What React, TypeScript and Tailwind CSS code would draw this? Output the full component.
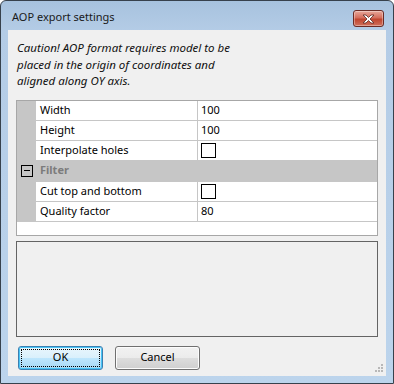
import React from 'react';

const font = { fontFamily: '"Noto Sans", "Open Sans", sans-serif' };

type Row =
  | { kind: 'text'; name: string; value: string }
  | { kind: 'check'; name: string }
  | { kind: 'group'; name: string };

const rows: Row[] = [
  { kind: 'text', name: 'Width', value: '100' },
  { kind: 'text', name: 'Height', value: '100' },
  { kind: 'check', name: 'Interpolate holes' },
  { kind: 'group', name: 'Filter' },
  { kind: 'check', name: 'Cut top and bottom' },
  { kind: 'text', name: 'Quality factor', value: '80' },
];

function CloseButton() {
  return (
    <div className="w-[31px] h-[17px] rounded-[3px] border border-[#6b2b25] bg-[linear-gradient(to_bottom,#e8a89b_0%,#d46d5c_45%,#c0452f_55%,#d0705c_100%)] flex items-center justify-center shadow-[inset_0_0_0_1px_rgba(255,255,255,0.35)]">
      <svg width="13" height="10" viewBox="0 0 13 10">
        <path
          d="M1 1 L4 1 L6.5 3.5 L9 1 L12 1 L8 5 L12 9 L9 9 L6.5 6.5 L4 9 L1 9 L5 5 Z"
          fill="#ffffff"
          stroke="#5a2a24"
          strokeWidth="0.8"
          strokeLinejoin="round"
        />
      </svg>
    </div>
  );
}

function Checkbox() {
  return <div className="w-[15px] h-[15px] border border-black bg-white" />;
}

function PropertyGrid() {
  return (
    <div className="mx-[8px] h-[136px] border border-[#a7a7a7] bg-white flex">
      <div className="flex-1 flex flex-col">
        {rows.map((r) =>
          r.kind === 'group' ? (
            <div key={r.name} className="h-[21px] bg-[#c6c6c6] flex items-center border-b border-[#c6c6c6]">
              <div className="w-[19px] flex justify-center">
                <div className="w-[12px] h-[12px] border border-black flex items-center justify-center">
                  <div className="w-[6px] h-px bg-black" />
                </div>
              </div>
              <span className="pl-[4px] text-[11px] font-bold text-[#7c7c7c]">{r.name}</span>
            </div>
          ) : (
            <div key={r.name} className="h-[20px] flex">
              <div className="w-[19px] bg-[#c6c6c6]" />
              <div className="w-[161px] border-b border-[#c6c6c6] flex items-center pl-[4px] text-[11px] text-black">
                {r.name}
              </div>
              <div className="w-px bg-[#c6c6c6]" />
              <div className="flex-1 border-b border-[#c6c6c6] flex items-center pl-[3px] text-[11px] text-black">
                {r.kind === 'text' ? r.value : <Checkbox />}
              </div>
            </div>
          )
        )}
      </div>
    </div>
  );
}

export default function App() {
  return (
    <div style={font} className="w-[394px] h-[384px] overflow-hidden bg-white">
      <div className="w-full h-full rounded-t-[6px] border border-[#37414c] bg-[linear-gradient(to_bottom,#a7c2de_0px,#b4cce6_30px,#bcd4ec_100%)] flex flex-col">
        <div className="h-[29px] flex items-start justify-between pl-[11px] pr-[9px]">
          <span className="mt-[8px] text-[11px] text-[#1a1a1a]">AOP export settings</span>
          <div className="mt-[9px]">
            <CloseButton />
          </div>
        </div>
        <div className="relative ml-[7px] mr-[7px] h-[346px] bg-[#f0f0f0] flex flex-col">
          <p className="pt-[10px] pl-[9px] text-[11.5px] italic leading-[16.5px] text-[#111]">
            Caution! AOP format requires model to be
            <br />
            placed in the origin of coordinates and
            <br />
            aligned along OY axis.
          </p>
          <div className="mt-[10px]">
            <PropertyGrid />
          </div>
          <div className="mx-[8px] mt-[5px] h-[96px] border border-[#646464] bg-[#f0f0f0]" />
          <div className="mt-[9px] ml-[10px] flex gap-[12px]">
            <button className="w-[85px] h-[24px] rounded-[3px] border border-[#3c7fb1] bg-[linear-gradient(to_bottom,#eaf6fd_0%,#d9f0fc_50%,#bee6fd_51%,#a7d9f5_100%)] p-[2px] shadow-[inset_0_0_0_1px_#48c4f5]">
              <div className="w-full h-full border border-dotted border-black flex items-center justify-center text-[11px] text-black">
                OK
              </div>
            </button>
            <button className="w-[85px] h-[24px] rounded-[3px] border border-[#707070] bg-[linear-gradient(to_bottom,#f2f2f2_0%,#ebebeb_50%,#dddddd_51%,#cfcfcf_100%)] flex items-center justify-center text-[11px] text-black shadow-[inset_0_0_0_1px_#fcfcfc]">
              Cancel
            </button>
          </div>
          <svg className="absolute right-[2px] bottom-[3px]" width="10" height="10" viewBox="0 0 10 10">
            {[
              [7, 1],
              [4, 4],
              [7, 4],
              [1, 7],
              [4, 7],
              [7, 7],
            ].map(([x, y]) => (
              <rect key={`${x}-${y}`} x={x} y={y} width="2" height="2" fill="#b8b8b8" />
            ))}
          </svg>
        </div>
      </div>
    </div>
  );
}
